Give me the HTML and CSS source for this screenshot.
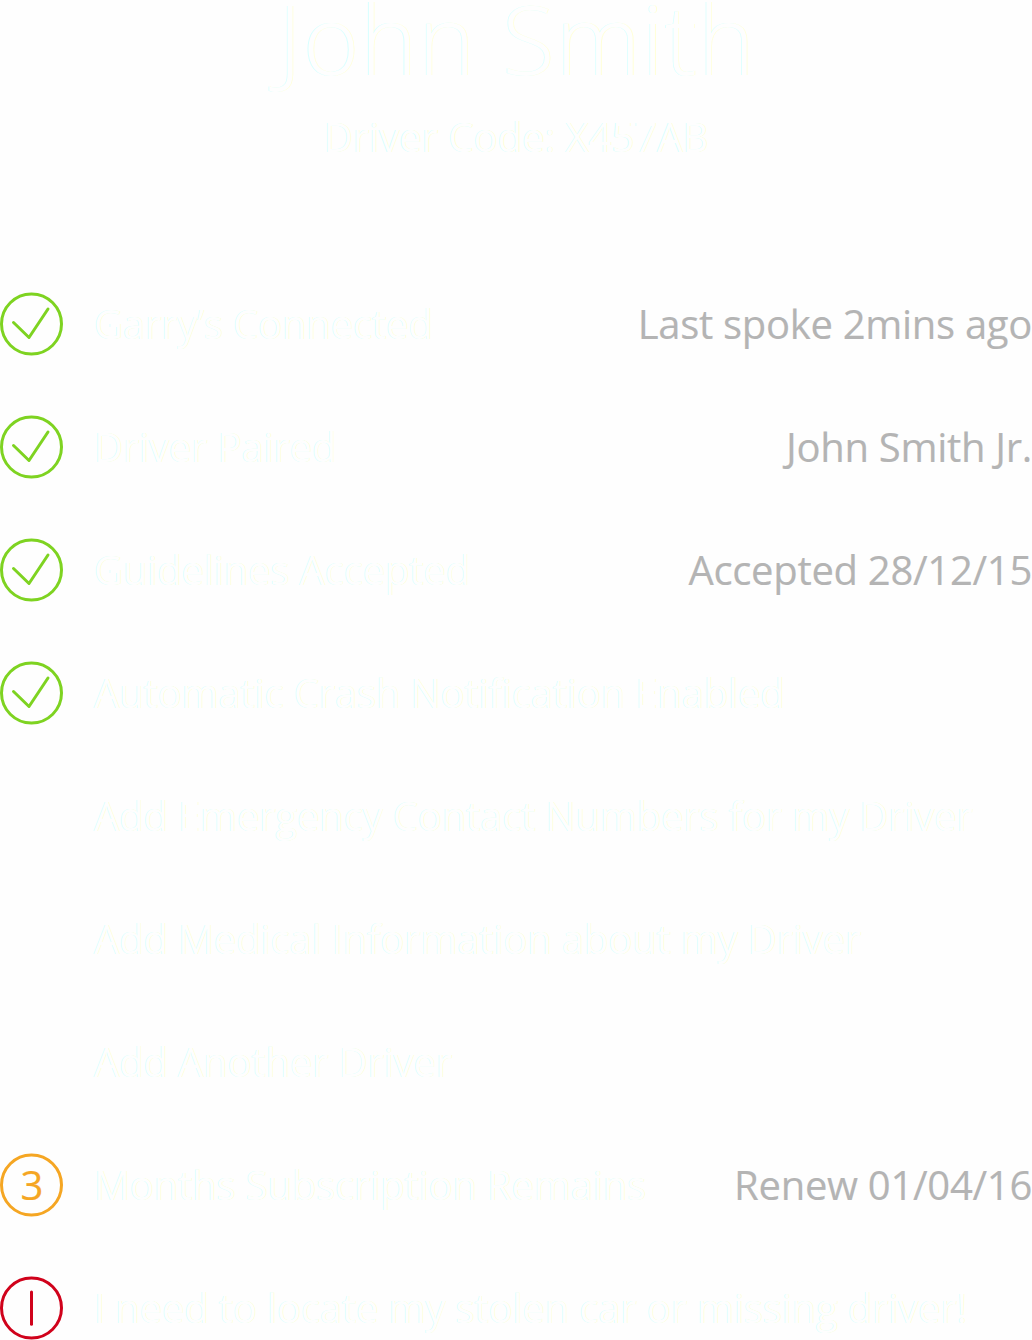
FILE: index.html
```html
<!DOCTYPE html>
<html lang="en">
<head>
<meta charset="utf-8">
<title>John Smith</title>
<link rel="stylesheet" href="styles.css">
</head>
<body>
<svg class="defs" width="0" height="0" aria-hidden="true">
  <symbol id="check" viewBox="0 0 63 64">
    <circle cx="31.5" cy="32" r="30"/>
    <path d="M13.5 30.5 29 45.5 48 17"/>
  </symbol>
</svg>
<main class="driver">
  <header class="head">
    <h1 class="name">John Smith</h1>
    <p class="code">Driver Code: X457AB</p>
  </header>
  <ul class="list">
    <li class="row"><svg class="icon ok"><use href="#check"/></svg><span class="label">Garry’s Connected</span><span class="value">Last spoke 2mins ago</span></li>
    <li class="row"><svg class="icon ok"><use href="#check"/></svg><span class="label">Driver Paired</span><span class="value">John Smith Jr.</span></li>
    <li class="row"><svg class="icon ok"><use href="#check"/></svg><span class="label">Guidelines Accepted</span><span class="value">Accepted 28/12/15</span></li>
    <li class="row"><svg class="icon ok"><use href="#check"/></svg><span class="label">Automatic Crash Notification Enabled</span></li>
    <li class="row"><span class="icon"></span><span class="label">Add Emergency Contact Numbers for my Driver</span></li>
    <li class="row"><span class="icon"></span><span class="label">Add Medical Information about my Driver</span></li>
    <li class="row"><span class="icon"></span><span class="label">Add Another Driver</span></li>
    <li class="row"><svg class="icon warn" viewBox="0 0 63 64"><circle cx="31.5" cy="32" r="30"/><text class="count" x="32" y="47" text-anchor="middle">3</text></svg><span class="label">Months Subscription Remains</span><span class="value">Renew 01/04/16</span></li>
    <li class="row"><svg class="icon alert" viewBox="0 0 63 64"><circle cx="31.5" cy="32" r="30"/><path d="M31.5 16V48.3"/></svg><span class="label">I need to locate my stolen car or missing driver!</span></li>
  </ul>
</main>
</body>
</html>
```
FILE: styles.css
```css
body {
  margin: 0;
  background: #fefefe;
  font-family: "Open Sans", "Noto Sans", sans-serif;
  font-size: 40px;
  color: #fefefe;
}

.defs {
  display: block;
}

.driver {
  width: 1032px;
  height: 1340px;
}

.head {
  height: 292px;
  text-align: center;
  text-shadow: -0.8px 0 #d8ffff, 0.8px 0 #ffffd8;
}

.name {
  margin: 0;
  height: 107px;
  line-height: 75px;
  font-size: 96px;
  font-weight: 300;
  letter-spacing: 1.2px;
  text-indent: 2px;
}

.code {
  margin: 0;
  line-height: 60px;
}

.list {
  display: grid;
  gap: 59px;
  margin: 0;
  padding: 0;
  list-style: none;
}

.row {
  display: flex;
  align-items: center;
  height: 64px;
  line-height: 64px;
  white-space: nowrap;
}

.icon {
  flex: none;
  width: 63px;
  height: 64px;
  margin-right: 31px;
  fill: none;
  stroke-width: 3;
  stroke-linecap: round;
  stroke-linejoin: round;
}

.ok {
  stroke: #7ed321;
}

.warn {
  stroke: #f5a623;
}

.alert {
  stroke: #d0021b;
}

.count {
  fill: #f5a623;
  stroke: #f5a623;
  stroke-width: 0.2;
}

.label {
  flex: 1;
  letter-spacing: -0.16px;
  text-shadow: -0.7px 0 #d8ffff, 0.7px 0 #ffffd8;
}

.value {
  color: #b4b4b4;
  letter-spacing: -0.3px;
  -webkit-text-stroke: 0.15px #b4b4b4;
}
```
